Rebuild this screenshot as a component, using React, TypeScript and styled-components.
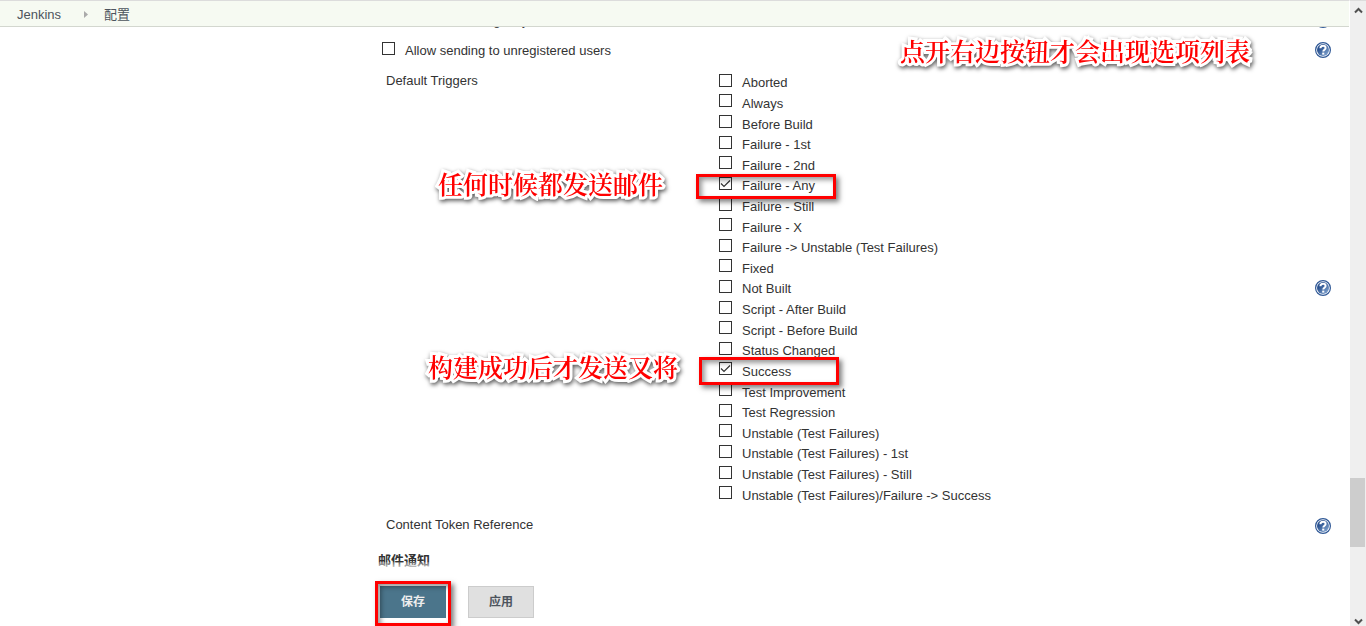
import React from "react";
import styled, { createGlobalStyle } from "styled-components";

const GlobalStyle = createGlobalStyle`
  * { box-sizing: border-box; }
  body {
    margin: 0;
    background: #fff;
    color: #333;
    font: 13px/18px "Liberation Sans", Arial, "Noto Sans CJK SC", sans-serif;
  }
`;

const Viewport = styled.div`
  display: flex;
  height: 100vh;
  overflow: hidden;
`;

const Page = styled.div`
  position: relative;
  flex: 1;
  min-width: 0;
  overflow: hidden;
`;

const Breadcrumbs = styled.nav`
  position: absolute;
  z-index: 2;
  top: 0;
  left: 0;
  right: 0;
  height: 27px;
  display: flex;
  align-items: center;
  padding: 2px 17px 0;
  background: #f6faf2;
  border-top: 1px solid #dcdcdc;
  border-bottom: 1px solid #d3d7cf;
`;

const Crumb = styled.a`
  color: #4d545d;
  text-decoration: none;
`;

const CrumbArrow = styled.svg`
  width: 10px;
  height: 9px;
  margin: 0 11px 0 22px;
`;

const Form = styled.form`
  padding: 5px 18px 0 378px;
`;

const Row = styled.div`
  display: flex;
  align-items: center;
  min-height: 30px;
`;

const CheckLabel = styled.label`
  display: flex;
  align-items: center;
  gap: 10px;
  white-space: nowrap;
`;

const SettingCheck = styled(CheckLabel)`
  flex: 1;
  padding: 0 0 2px 4px;
`;

const CheckText = styled.span`
  padding-top: 4px;
  line-height: 16px;
`;

const Checkbox = styled.input`
  appearance: none;
  flex: none;
  width: 13px;
  height: 13px;
  margin: 0 0 2px;
  border: 1px solid #333;
  background: #fff;
  &:checked {
    background: #fff
      url("data:image/svg+xml,%3Csvg xmlns='http://www.w3.org/2000/svg' viewBox='0 0 11 11'%3E%3Cpath d='M1 5.5l3 3L10 2.5' fill='none' stroke='%23333' stroke-width='1.2'/%3E%3C/svg%3E")
      center / 11px 11px no-repeat;
  }
`;

const FieldName = styled.span`
  flex: 0 0 341px;
  padding: 1px 0 0 8px;
`;

const SettingName = styled.span`
  flex: 1;
  padding: 0 0 2px 8px;
`;

const TriggerRow = styled.fieldset`
  display: flex;
  align-items: flex-start;
  margin: 0;
  padding: 6px 0 7px;
  border: 0;
  min-width: 0;
`;

const TriggerList = styled.ul`
  flex: 1;
  display: grid;
  grid-template-rows: repeat(21, 1fr);
  height: 433px;
  margin: 0;
  padding: 0;
  list-style: none;
`;

const Trigger = styled.li`
  position: relative;
  display: flex;
  align-items: center;
`;

const HelpButton = styled.button`
  align-self: center;
  flex: none;
  width: 16px;
  height: 16px;
  padding: 0;
  border: 0;
  background: none;
  svg { display: block; }
`;

const SectionTitle = styled.h2`
  margin: 0;
  padding-top: 11px;
  font-size: 13px;
  line-height: 18px;
`;

const ButtonBar = styled.div`
  position: absolute;
  z-index: 1;
  left: 378px;
  right: 0;
  bottom: 0;
  display: flex;
  gap: 22px;
  padding: 24px 2px 8px;
  background: linear-gradient(rgba(255, 255, 255, 0.2), #fff 8px);
`;

const ActionButton = styled.button<{ $primary?: boolean }>`
  width: 66px;
  height: 32px;
  padding: 0;
  border: 1px solid ${(p) => (p.$primary ? "#4b758b" : "#ccc")};
  background: ${(p) => (p.$primary ? "#4b758b" : "#e0e0e0")};
  color: ${(p) => (p.$primary ? "#eee" : "#4d545d")};
  font: bold 12px/18px "Liberation Sans", "Noto Sans CJK SC", sans-serif;
`;

const SaveSlot = styled.div`
  position: relative;
`;

const Marker = styled.span<{ $inset: string }>`
  position: absolute;
  z-index: 1;
  inset: ${(p) => p.$inset};
  border: 3px solid #f00;
  box-shadow: 3px 3px 5px rgba(0, 0, 0, 0.5), inset 3px 3px 5px rgba(0, 0, 0, 0.4);
  pointer-events: none;
`;

const TriggerMarker = styled(Marker)`
  width: 140px;
`;

const Note = styled.strong<{ $left: string; $top: string }>`
  position: absolute;
  z-index: 1;
  left: ${(p) => p.$left};
  top: ${(p) => p.$top};
  color: #f00;
  font: 600 25px/30px "Noto Serif CJK SC", "Noto Sans CJK SC", serif;
  white-space: nowrap;
  -webkit-text-stroke: 6px #fff;
  paint-order: stroke fill;
  filter: drop-shadow(1px 2px 2px rgba(0, 0, 0, 0.65));
  pointer-events: none;
`;

const ScrollTrack = styled.div`
  flex: 0 0 17px;
  display: grid;
  grid-template-rows: 19px 458fr 69fr 70fr 9px;
  justify-items: center;
  align-items: center;
  border-top: 1px solid #dcdcdc;
  border-left: 1px solid #fff;
  background: #efefef;
`;

const ScrollThumb = styled.div`
  grid-row: 3;
  align-self: stretch;
  justify-self: start;
  width: 15px;
  background: #cdcdcd;
`;

const ScrollArrow = styled.svg<{ $row: number }>`
  grid-row: ${(p) => p.$row};
  width: 9px;
  height: 7px;
`;

function Help({ topic }: { topic: string }) {
  return (
    <HelpButton type="button" aria-label={`Help for feature: ${topic}`}>
      <svg width="16" height="16" viewBox="0 0 16 16">
        <defs>
          <linearGradient id="helpFill" x1="0" y1="0" x2="1" y2="1">
            <stop offset="0.3" stopColor="#2a5290" />
            <stop offset="1" stopColor="#8fb0d8" />
          </linearGradient>
        </defs>
        <circle cx="8" cy="8" r="7.4" fill="#fff" stroke="#2f5896" strokeWidth="1.2" />
        <circle cx="8" cy="8" r="6" fill="url(#helpFill)" />
        <path
          d="M5.400 6.200C5.400 4.500 6.500 3.700 8 3.700s2.600.9 2.600 2.300c0 1.700-2.300 1.800-2.300 3.600"
          fill="none"
          stroke="#fff"
          strokeWidth="2"
        />
        <rect x="7.200" y="10.600" width="2.100" height="2" fill="#fff" />
      </svg>
    </HelpButton>
  );
}

const triggers = [
  "Aborted",
  "Always",
  "Before Build",
  "Failure - 1st",
  "Failure - 2nd",
  "Failure - Any",
  "Failure - Still",
  "Failure - X",
  "Failure -> Unstable (Test Failures)",
  "Fixed",
  "Not Built",
  "Script - After Build",
  "Script - Before Build",
  "Status Changed",
  "Success",
  "Test Improvement",
  "Test Regression",
  "Unstable (Test Failures)",
  "Unstable (Test Failures) - 1st",
  "Unstable (Test Failures) - Still",
  "Unstable (Test Failures)/Failure -> Success",
];

const highlights: Record<string, { box: string; note: string; left: string; top: string }> = {
  "Failure - Any": { box: "0 auto -4px -23px", note: "任何时候都发送邮件", left: "-281px", top: "-6px" },
  Success: { box: "-3px auto -5px -20px", note: "构建成功后才发送又将", left: "-291px", top: "-9px" },
};

export default function App() {
  return (
    <Viewport>
      <GlobalStyle />
      <Page>
        <Breadcrumbs>
          <Crumb href="#">Jenkins</Crumb>
          <CrumbArrow viewBox="0 0 10 9">
            <path d="M1 1v7l4-3.500z" fill="#aaa" />
          </CrumbArrow>
          <Crumb href="#">配置</Crumb>
        </Breadcrumbs>

        <Form>
          <Row>
            <SettingCheck>
              <Checkbox type="checkbox" />
              <CheckText>Enable watching for jobs</CheckText>
            </SettingCheck>
            <Help topic="Enable watching for jobs" />
          </Row>
          <Row>
            <SettingCheck>
              <Checkbox type="checkbox" />
              <CheckText>Allow sending to unregistered users</CheckText>
            </SettingCheck>
            <Help topic="Allow sending to unregistered users" />
          </Row>
          <TriggerRow aria-label="Default Triggers">
            <FieldName>Default Triggers</FieldName>
            <TriggerList>
              {triggers.map((name) => {
                const mark = highlights[name];
                return (
                  <Trigger key={name}>
                    <CheckLabel>
                      <Checkbox type="checkbox" defaultChecked={Boolean(mark)} />
                      <CheckText>{name}</CheckText>
                    </CheckLabel>
                    {mark && (
                      <>
                        <TriggerMarker $inset={mark.box} />
                        <Note $left={mark.left} $top={mark.top}>{mark.note}</Note>
                      </>
                    )}
                  </Trigger>
                );
              })}
            </TriggerList>
            <Help topic="Default Triggers" />
          </TriggerRow>
          <Row>
            <SettingName>Content Token Reference</SettingName>
            <Help topic="Content Token Reference" />
          </Row>
          <SectionTitle>邮件通知</SectionTitle>
        </Form>

        <Note $left="900px" $top="35px">点开右边按钮才会出现选项列表</Note>

        <ButtonBar>
          <SaveSlot>
            <ActionButton type="button" $primary>保存</ActionButton>
            <Marker $inset="-5px -5px -8px" />
          </SaveSlot>
          <ActionButton type="button">应用</ActionButton>
        </ButtonBar>
      </Page>
      <ScrollTrack aria-hidden="true">
        <ScrollArrow $row={1} viewBox="0 0 9 7">
          <path d="M1 5.500l3.500-3.500L8 5.500" fill="none" stroke="#505050" strokeWidth="2" />
        </ScrollArrow>
        <ScrollThumb />
        <ScrollArrow $row={5} viewBox="0 0 9 7">
          <path d="M1 1.500l3.500 3.500L8 1.500" fill="none" stroke="#505050" strokeWidth="2" />
        </ScrollArrow>
      </ScrollTrack>
    </Viewport>
  );
}
